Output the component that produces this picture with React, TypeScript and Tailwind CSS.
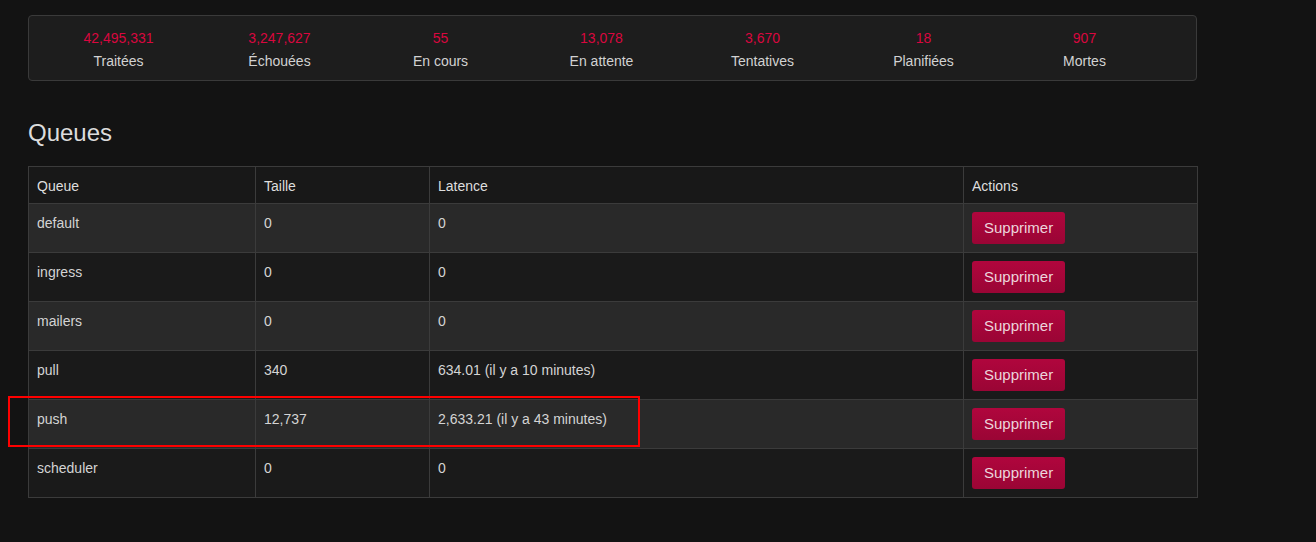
import React from "react";

const stats = [
  { n: "42,495,331", l: "Traitées" },
  { n: "3,247,627", l: "Échouées" },
  { n: "55", l: "En cours" },
  { n: "13,078", l: "En attente" },
  { n: "3,670", l: "Tentatives" },
  { n: "18", l: "Planifiées" },
  { n: "907", l: "Mortes" },
];

const queues = [
  { name: "default", size: "0", latency: "0" },
  { name: "ingress", size: "0", latency: "0" },
  { name: "mailers", size: "0", latency: "0" },
  { name: "pull", size: "340", latency: "634.01 (il y a 10 minutes)" },
  { name: "push", size: "12,737", latency: "2,633.21 (il y a 43 minutes)" },
  { name: "scheduler", size: "0", latency: "0" },
];

function StatsBar() {
  return (
    <div className="flex rounded-[4px] border border-[#3a3a3a] bg-[#1d1d1d] px-[9px] pb-[8px] pt-[11px]">
      {stats.map((s) => (
        <div key={s.l} className="flex w-[161px] flex-col items-center text-[14px] leading-[22px]">
          <span className="text-[#d9073f]">{s.n}</span>
          <span className="mt-px text-[#d2d2d2]">{s.l}</span>
        </div>
      ))}
    </div>
  );
}

function QueueTable() {
  const cell = "border border-[#3b3b3b] px-2 pb-[7px] pt-[9px] align-top leading-5";
  return (
    <div className="relative">
      <table className="w-[1169px] table-fixed border-collapse text-left text-[14px] text-[#d4d4d4]">
        <colgroup>
          <col className="w-[227px]" />
          <col className="w-[174px]" />
          <col className="w-[534px]" />
          <col className="w-[234px]" />
        </colgroup>
        <thead>
          <tr className="bg-[#181818] text-[#dedede]">
            <th className={`${cell} font-normal`}>Queue</th>
            <th className={`${cell} font-normal`}>Taille</th>
            <th className={`${cell} font-normal`}>Latence</th>
            <th className={`${cell} font-normal`}>Actions</th>
          </tr>
        </thead>
        <tbody>
          {queues.map((q, i) => (
            <tr key={q.name} className={i % 2 === 0 ? "bg-[#292929]" : "bg-[#1a1a1a]"}>
              <td className={cell}>{q.name}</td>
              <td className={cell}>{q.size}</td>
              <td className={cell}>{q.latency}</td>
              <td className="border border-[#3b3b3b] px-2 py-2 align-top">
                <button className="h-8 rounded-[3px] bg-gradient-to-b from-[#b0063d] to-[#9a0535] px-3 text-[15px] text-[#ecd5dc]">
                  Supprimer
                </button>
              </td>
            </tr>
          ))}
        </tbody>
      </table>
      {/* highlight around the push row */}
      <div className="pointer-events-none absolute left-[-20px] top-[230px] h-[51px] w-[632px] border-2 border-[#ff0000]" />
    </div>
  );
}

export default function App() {
  return (
    <div
      className="min-h-[542px] bg-[#131313] px-[28px] pt-[15px]"
      style={{ fontFamily: '"Liberation Sans", Arial, sans-serif' }}
    >
      <div className="w-[1169px]">
        <StatsBar />
        <h3 className="mb-[18px] mt-[37px] text-[24px] leading-[30px] text-[#dcdcdc]">Queues</h3>
        <QueueTable />
      </div>
    </div>
  );
}
